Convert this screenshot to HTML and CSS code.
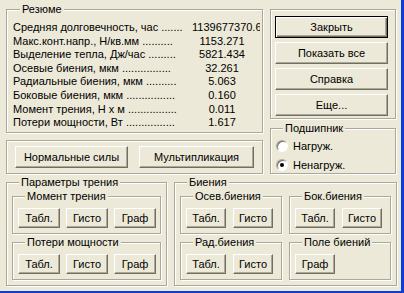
FILE: index.html
```html
<!DOCTYPE html>
<html lang="ru">
<head>
    <meta charset="UTF-8">
    <title>Резюме</title>
    <link rel="stylesheet" href="styles.css">
</head>
<body>
    <div class="window">
        <div class="top">
            <div class="left-col">
                <fieldset class="group resume">
                    <legend>Резюме</legend>
                    <div class="row"><span class="name">Средняя долговечность, час .......</span><span class="val long">1139677370.6</span></div>
                    <div class="row"><span class="name">Макс.конт.напр., Н/кв.мм ..........</span><span class="val">1153.271</span></div>
                    <div class="row"><span class="name">Выделение тепла, Дж/час .........</span><span class="val">5821.434</span></div>
                    <div class="row"><span class="name">Осевые биения, мкм ................</span><span class="val">32.261</span></div>
                    <div class="row"><span class="name">Радиальные биения, мкм ..........</span><span class="val">5.063</span></div>
                    <div class="row"><span class="name">Боковые биения, мкм ................</span><span class="val">0.160</span></div>
                    <div class="row"><span class="name">Момент трения, Н x м ................</span><span class="val">0.011</span></div>
                    <div class="row"><span class="name">Потери мощности, Вт ................</span><span class="val">1.617</span></div>
                </fieldset>
                <fieldset class="group forces">
                    <button class="btn force-a">Нормальные силы</button>
                    <button class="btn force-b">Мультипликация</button>
                </fieldset>
            </div>
            <div class="right-col">
                <fieldset class="group actions">
                    <button class="btn action default">Закрыть</button>
                    <button class="btn action">Показать все</button>
                    <button class="btn action">Справка</button>
                    <button class="btn action">Еще...</button>
                </fieldset>
                <fieldset class="group bearing">
                    <legend>Подшипник</legend>
                    <label class="radio"><span class="mark"></span>Нагруж.</label>
                    <label class="radio checked"><span class="mark"></span>Ненагруж.</label>
                </fieldset>
            </div>
        </div>

        <div class="bottom">
            <fieldset class="group friction">
                <legend>Параметры трения</legend>
                <fieldset class="group sub">
                    <legend>Момент трения</legend>
                    <div class="btns">
                        <button class="btn small">Табл.</button>
                        <button class="btn small">Гисто</button>
                        <button class="btn small">Граф</button>
                    </div>
                </fieldset>
                <fieldset class="group sub">
                    <legend>Потери мощности</legend>
                    <div class="btns">
                        <button class="btn small">Табл.</button>
                        <button class="btn small">Гисто</button>
                        <button class="btn small">Граф</button>
                    </div>
                </fieldset>
            </fieldset>
            <fieldset class="group runout">
                <legend>Биения</legend>
                <div class="runout-grid">
                    <fieldset class="group sub">
                        <legend>Осев.биения</legend>
                        <div class="btns narrow">
                            <button class="btn small">Табл.</button>
                            <button class="btn small">Гисто</button>
                        </div>
                    </fieldset>
                    <fieldset class="group sub">
                        <legend>Бок.биения</legend>
                        <div class="btns narrow">
                            <button class="btn small">Табл.</button>
                            <button class="btn small">Гисто</button>
                        </div>
                    </fieldset>
                    <fieldset class="group sub">
                        <legend>Рад.биения</legend>
                        <div class="btns narrow">
                            <button class="btn small">Табл.</button>
                            <button class="btn small">Гисто</button>
                        </div>
                    </fieldset>
                    <fieldset class="group sub">
                        <legend>Поле биений</legend>
                        <div class="btns narrow">
                            <button class="btn small">Граф</button>
                        </div>
                    </fieldset>
                </div>
            </fieldset>
        </div>
    </div>
</body>
</html>
```

FILE: styles.css
```css
/* Basic Resets */
* {
    margin: 0;
    padding: 0;
    box-sizing: border-box;
}

html, body {
    width: 404px;
    height: 293px;
    overflow: hidden;
}

body {
    background: #0b3fd8;
    font-family: "Liberation Sans", Arial, sans-serif;
    font-size: 11px;
    color: #000;
}

.window {
    width: 401px;
    height: 291px;
    background: #ece9d8;
    padding: 3px 0 0 6px;
}

/* Group boxes */
.group {
    border: 1px solid #aca899;
    box-shadow: inset 1px 1px #fff, 1px 1px #fff;
    min-width: 0;
}

.group legend {
    margin-left: 7px;
    padding: 0 2px;
    line-height: 13px;
    background: #ece9d8;
}

/* Buttons */
.btn {
    font-family: inherit;
    font-size: 11px;
    color: #000;
    background: #ece9d8;
    border: 1px solid;
    border-color: #fff #716f64 #716f64 #fff;
    box-shadow: inset -1px -1px #aca899;
    text-align: center;
    white-space: nowrap;
}

.btn.default {
    border-color: #000;
    box-shadow: inset 1px 1px #fff, inset -1px -1px #716f64, inset -2px -2px #aca899;
}

/* Top part */
.top {
    display: flex;
    gap: 7px;
}

.left-col {
    width: 257px;
}

.right-col {
    width: 126px;
}

.resume {
    height: 130px;
    padding: 5px 0 0 6px;
}

.row {
    display: flex;
    height: 13.6px;
    line-height: 13.6px;
    white-space: nowrap;
}

.row .name {
    width: 179px;
    overflow: hidden;
}

.row .val {
    width: 60px;
    text-align: center;
}

.row .val.long {
    width: 68px;
    text-align: left;
    overflow: hidden;
}

.forces {
    margin-top: 7px;
    height: 34px;
    padding: 5px 0 0 8px;
    display: flex;
    gap: 11px;
}

.forces .btn {
    height: 22px;
}

.force-a {
    width: 113px;
}

.force-b {
    width: 115px;
}

.actions {
    margin-top: 6px;
    height: 110px;
    padding: 6px 0 0 4px;
    display: flex;
    flex-direction: column;
    gap: 4px;
}

.action {
    width: 113px;
    height: 22px;
}

.bearing {
    margin-top: 3px;
    height: 52px;
    padding: 1px 0 0 5px;
}

.radio {
    display: flex;
    align-items: center;
    gap: 5px;
    height: 19px;
}

.radio .mark {
    width: 12px;
    height: 12px;
    border-radius: 50%;
    background: #fff;
    border: 1px solid;
    border-color: #aca899 #fff #fff #aca899;
    box-shadow: inset 1px 1px #716f64;
    display: flex;
    align-items: center;
    justify-content: center;
}

.radio.checked .mark::after {
    content: "";
    width: 4px;
    height: 4px;
    border-radius: 50%;
    background: #000;
}

/* Bottom part */
.bottom {
    margin-top: 2px;
    display: flex;
    gap: 7px;
}

.friction {
    width: 161px;
    height: 110px;
    padding: 1px 5px 0;
    display: flex;
    flex-direction: column;
    gap: 2px;
}

.runout {
    width: 223px;
    height: 110px;
    padding: 1px 5px 0;
}

.runout-grid {
    display: grid;
    grid-template-columns: 102px 102px;
    grid-auto-rows: 44px;
    column-gap: 7px;
    row-gap: 2px;
}

.sub {
    height: 44px;
    padding: 5px 0 0 5px;
}

.btns {
    display: flex;
    gap: 6px;
}

.btns.narrow {
    gap: 7px;
}

.btn.small {
    width: 42px;
    height: 20px;
}

.btns.narrow .btn.small {
    width: 40px;
}
```
